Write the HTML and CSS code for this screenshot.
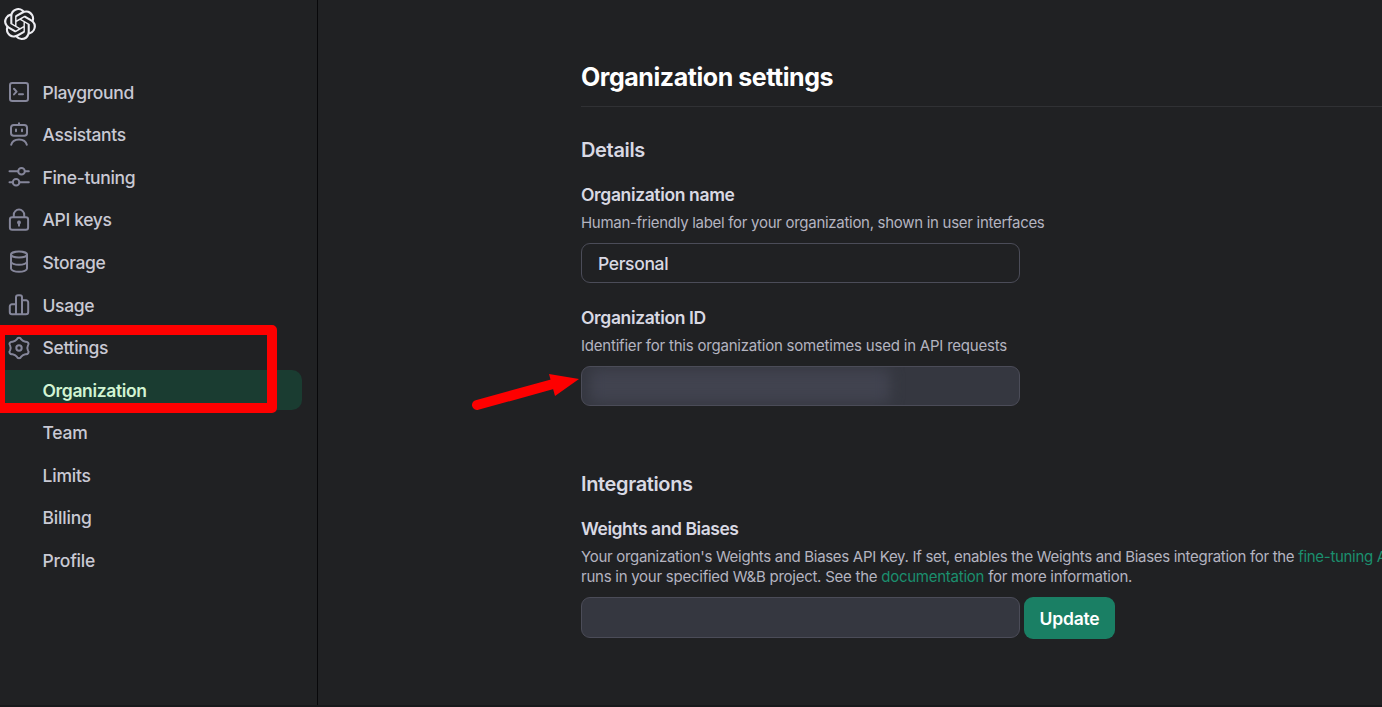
FILE: index.html
```
<!DOCTYPE html>
<html lang="en">
<head>
    <meta charset="UTF-8">
    <meta name="viewport" content="width=device-width, initial-scale=1.0">
    <title>Organization settings</title>
    <link rel="stylesheet" href="styles.css">
</head>
<body>
    <div class="sidebar">
        <svg class="logo" viewBox="0 0 24 24" fill="currentColor">
            <path d="M22.2819 9.8211a5.9847 5.9847 0 0 0-.5157-4.9108 6.0462 6.0462 0 0 0-6.5098-2.9A6.0651 6.0651 0 0 0 4.9807 4.1818a5.9847 5.9847 0 0 0-3.9977 2.9 6.0462 6.0462 0 0 0 .7427 7.0966 5.98 5.98 0 0 0 .511 4.9107 6.051 6.051 0 0 0 6.5146 2.9001A5.9847 5.9847 0 0 0 13.2599 24a6.0557 6.0557 0 0 0 5.7718-4.2058 5.9894 5.9894 0 0 0 3.9977-2.9001 6.0557 6.0557 0 0 0-.7475-7.0729zm-9.022 12.6081a4.4755 4.4755 0 0 1-2.8764-1.0408l.1419-.0804 4.7783-2.7582a.7948.7948 0 0 0 .3927-.6813v-6.7369l2.02 1.1686a.071.071 0 0 1 .038.052v5.5826a4.504 4.504 0 0 1-4.4945 4.4944zm-9.6607-4.1254a4.4708 4.4708 0 0 1-.5346-3.0137l.142.0852 4.783 2.7582a.7712.7712 0 0 0 .7806 0l5.8428-3.3685v2.3324a.0804.0804 0 0 1-.0332.0615L9.74 19.9502a4.4992 4.4992 0 0 1-6.1408-1.6464zM2.3408 7.8956a4.485 4.485 0 0 1 2.3655-1.9728V11.6a.7664.7664 0 0 0 .3879.6765l5.8144 3.3543-2.0201 1.1685a.0757.0757 0 0 1-.071 0l-4.8303-2.7865A4.504 4.504 0 0 1 2.3408 7.872zm16.5963 3.8558L13.1038 8.364 15.1192 7.2a.0757.0757 0 0 1 .071 0l4.8303 2.7913a4.4944 4.4944 0 0 1-.6765 8.1042v-5.6772a.79.79 0 0 0-.407-.667zm2.0107-3.0231l-.142-.0852-4.7735-2.7818a.7759.7759 0 0 0-.7854 0L9.409 9.2297V6.8974a.0662.0662 0 0 1 .0284-.0615l4.8303-2.7866a4.4992 4.4992 0 0 1 6.6802 4.66zM8.3065 12.863l-2.02-1.1638a.0804.0804 0 0 1-.038-.0567V6.0742a4.4992 4.4992 0 0 1 7.3757-3.4537l-.142.0805L8.704 5.459a.7948.7948 0 0 0-.3927.6813zm1.0976-2.3654l2.602-1.4998 2.6069 1.4998v2.9994l-2.5974 1.4997-2.6067-1.4997Z"/>
        </svg>

        <nav class="menu">
            <a class="item">
                <svg class="icon" viewBox="0 0 22 22"><rect x="2" y="2" width="18" height="18" rx="2.2"/><path d="M6 7.8l2.6 2.8L6 13.4M11 13.2h4"/></svg>
                <span>Playground</span>
            </a>
            <a class="item">
                <svg class="icon" viewBox="0 0 22 22"><rect x="3" y="1" width="16" height="10.8" rx="2.8"/><path d="M11-.8V1M3.2 20.8c.8-3.2 3.8-5.3 7.8-5.3s7 2.1 7.8 5.3"/><path d="M8 5.6v1.6M14 5.6v1.6"/></svg>
                <span>Assistants</span>
            </a>
            <a class="item">
                <svg class="icon" viewBox="0 0 22 22"><path d="M1.5 5.2h8.7M17 5.2h3.8M1.5 16.2h3.2M11.5 16.2h9.3"/><circle cx="13.5" cy="5.2" r="3.3"/><circle cx="8.1" cy="16.2" r="3.3"/></svg>
                <span>Fine-tuning</span>
            </a>
            <a class="item">
                <svg class="icon" viewBox="0 0 22 22"><rect x="1.9" y="8.2" width="18.2" height="12.6" rx="2.2"/><path d="M5.8 8V5.8a5.2 5.2 0 0 1 10.4 0V8"/><path class="solid" d="M11 11.6a1.9 1.9 0 0 1 1.1 3.5l-.2 2.3h-1.8l-.2-2.3A1.9 1.9 0 0 1 11 11.6z"/></svg>
                <span>API keys</span>
            </a>
            <a class="item">
                <svg class="icon" viewBox="0 0 22 22"><ellipse cx="11" cy="3.6" rx="8" ry="3"/><path d="M3 3.6v14c0 1.8 3.6 3.2 8 3.2s8-1.4 8-3.2v-14M3 10.6c0 1.8 3.6 3.2 8 3.2s8-1.4 8-3.2"/></svg>
                <span>Storage</span>
            </a>
            <a class="item">
                <svg class="icon" viewBox="0 0 22 22"><path d="M8 20V3.2a2 2 0 0 1 2-2h2a2 2 0 0 1 2 2V20M8 10.2H4a2.2 2.2 0 0 0-2.2 2.2v5.6A2.2 2.2 0 0 0 4 20.2h14a2.2 2.2 0 0 0 2.2-2.2V8.4A2.2 2.2 0 0 0 18 6.2h-4"/></svg>
                <span>Usage</span>
            </a>
            <a class="item">
                <svg class="icon gear" viewBox="-11 -11 22 22"><path d="M-2.2-8.6C-1.4-10.9 1.4-10.9 2.2-8.6Q3.8-6.58 6.35-6.2C8.9-6.66 10.6-4.24 8.9-2.4Q7.7 0 8.9 2.4C10.6 4.24 8.9 6.66 6.35 6.2Q3.8 6.58 2.2 8.6C1.4 10.9-1.4 10.9-2.2 8.6Q-3.8 6.58-6.35 6.2C-8.9 6.66-10.6 4.24-8.9 2.4Q-7.7 0-8.9-2.4C-10.6-4.24-8.9-6.66-6.35-6.2Q-3.8-6.58-2.2-8.6z"/><circle r="2.7"/></svg>
                <span>Settings</span>
            </a>
            <a class="item sub active">Organization</a>
            <a class="item sub">Team</a>
            <a class="item sub">Limits</a>
            <a class="item sub">Billing</a>
            <a class="item sub">Profile</a>
        </nav>
        <div class="highlight"></div>
    </div>

    <div class="main">
        <h1>Organization settings</h1>

        <h2>Details</h2>
        <div class="field">
            <h3>Organization name</h3>
            <p>Human-friendly label for your organization, shown in user interfaces</p>
            <div class="input">Personal</div>
        </div>
        <div class="field">
            <h3>Organization ID</h3>
            <p class="loose">Identifier for this organization sometimes used in API requests</p>
            <div class="input filled"><div class="redacted"></div></div>
            <svg class="arrow" viewBox="0 0 108 38">
                <path d="M6 32L84 10.5" stroke="#fe0000" stroke-width="10" stroke-linecap="round"/>
                <path d="M78 1L108 6L84 23z" fill="#fe0000"/>
            </svg>
        </div>

        <h2 class="integrations">Integrations</h2>
        <div class="field">
            <h3 class="tight">Weights and Biases</h3>
            <p class="long">Your organization's Weights and Biases API Key. If set, enables the Weights and Biases integration for the <a>fine-tuning API</a><br>
            <span>runs in your specified W&amp;B project. See the <a>documentation</a> for more information.</span></p>
            <div class="row">
                <div class="input filled"></div>
                <button>Update</button>
            </div>
        </div>
    </div>
</body>
</html>
```
FILE: styles.css
```
* {
    box-sizing: border-box;
}
body {
    margin: 0;
    display: flex;
    width: 100%;
    height: 707px;
    overflow: hidden;
    background-color: #202123;
    color: #d9d9e3;
    font-family: Inter, "Liberation Sans", sans-serif;
    border-bottom: 2px solid #18191b;
}
.sidebar {
    position: relative;
    flex: 0 0 318px;
    height: 707px;
    border-right: 1px solid #08080a;
}
.logo {
    display: block;
    width: 32px;
    height: 32px;
    margin: 8px 0 0 4px;
    color: #ececf1;
}
.menu {
    display: flex;
    flex-direction: column;
    gap: 2px;
    margin-top: 32px;
}
.item {
    display: flex;
    align-items: center;
    gap: 12.5px;
    width: 302px;
    height: 40.55px;
    padding-left: 8px;
    border-radius: 0 10px 10px 0;
    color: #c9c9d4;
    font-size: 17.5px;
    font-weight: 500;
    letter-spacing: -0.34px;
}
.sub {
    padding-left: 42.5px;
    letter-spacing: -0.2px;
}
.active {
    background-color: #1a3c31;
    color: #d2f4d3;
    font-weight: 600;
    letter-spacing: -0.35px;
}
.icon {
    flex: none;
    width: 22px;
    height: 22px;
    overflow: visible;
    fill: none;
    stroke: #85869a;
    stroke-width: 2;
    stroke-linecap: round;
    stroke-linejoin: round;
}
.icon .solid {
    fill: #85869a;
    stroke: none;
}
.highlight {
    position: absolute;
    left: -5px;
    top: 325px;
    width: 282px;
    height: 88px;
    border: 10px solid #fe0000;
    border-radius: 5px;
}
.main {
    flex: 1;
    min-width: 0;
    padding: 60px 0 0 263px;
}
h1 {
    margin: 0;
    height: 47px;
    border-bottom: 1px solid #303134;
    color: #fff;
    font-size: 25px;
    font-weight: 700;
    letter-spacing: -0.45px;
    line-height: 34px;
}
h2 {
    margin: 30px 0 19px;
    font-size: 20px;
    font-weight: 600;
    letter-spacing: -0.35px;
    line-height: 26px;
}
h3 {
    margin: 0;
    font-size: 17.5px;
    font-weight: 600;
    letter-spacing: -0.36px;
    line-height: 26px;
}
.tight {
    letter-spacing: -0.44px;
}
.field {
    position: relative;
    margin-bottom: 22px;
}
.field p {
    margin: 5px 0 10px;
    color: #b4b4c0;
    font-size: 15px;
    letter-spacing: -0.29px;
    line-height: 20px;
    white-space: nowrap;
}
.field .loose {
    letter-spacing: -0.21px;
}
.field .long {
    letter-spacing: -0.305px;
}
.long span {
    letter-spacing: -0.25px;
}
.field p a {
    color: #1b8f6e;
}
.input {
    width: 439px;
    height: 40px;
    padding: 0 16px;
    border: 1px solid #4b4c58;
    border-radius: 9px;
    font-size: 17.5px;
    font-weight: 500;
    letter-spacing: -0.35px;
    line-height: 40px;
}
.filled {
    padding: 2px 8px;
    background-color: #353740;
    overflow: hidden;
}
.redacted {
    width: 300px;
    height: 34px;
    border-radius: 6px;
    background-color: #41434f;
    filter: blur(7px);
}
.arrow {
    position: absolute;
    left: -110px;
    top: 68px;
    width: 108px;
    height: 38px;
}
.integrations {
    margin-top: 65px;
}
.row {
    display: flex;
    gap: 4px;
}
.row .input {
    height: 41px;
}
button {
    width: 91px;
    height: 42px;
    padding: 0;
    border: none;
    border-radius: 9px;
    background-color: #1a7f64;
    color: #fff;
    font-family: inherit;
    font-size: 17.5px;
    font-weight: 600;
    letter-spacing: -0.2px;
}
```
